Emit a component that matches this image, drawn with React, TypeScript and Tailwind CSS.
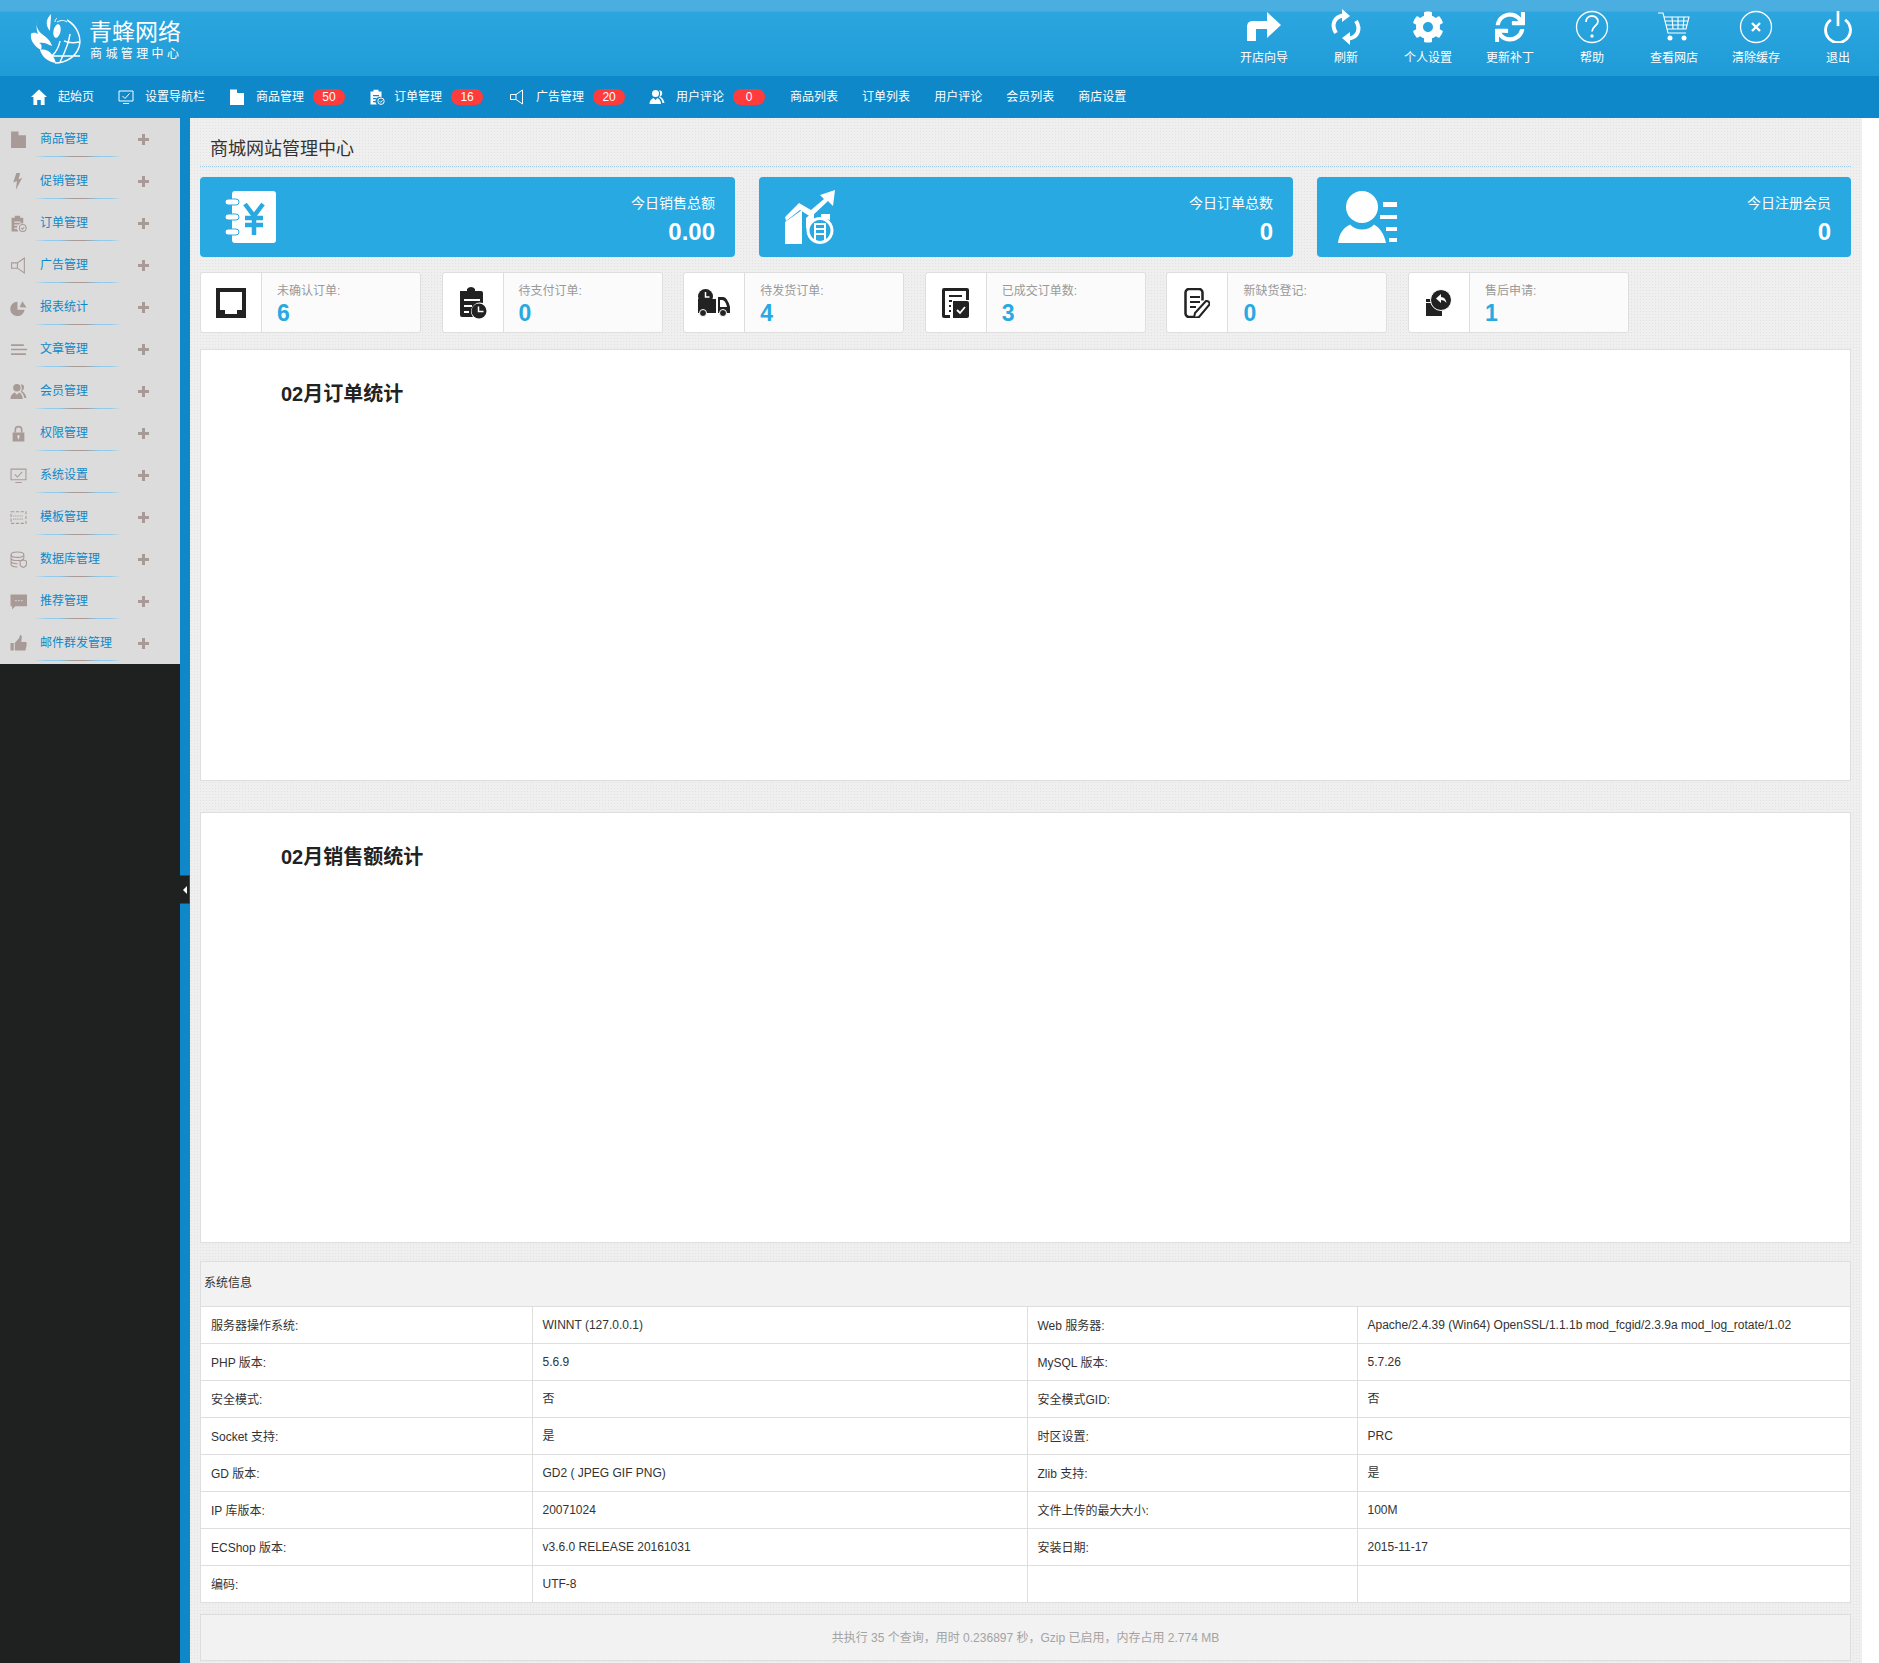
import type { ReactNode } from "react";
import { FaCog, FaSync } from "react-icons/fa";

function Svg({ size = 16, vb = "0 0 16 16", children }: { size?: number; vb?: string; children: ReactNode }) {
  return (
    <svg width={size} height={size} viewBox={vb} fill="currentColor" className="block shrink-0">
      {children}
    </svg>
  );
}

const IconHome = () => (
  <Svg>
    <path d="M8 0.5 16 8h-2.4v8H9.8v-5H6.2v5H2.4V8H0z" />
  </Svg>
);
const IconMonitor = () => (
  <Svg>
    <path d="M1 2h14v10H1z" fill="none" stroke="currentColor" />
    <path d="M4.500 7 7 9.500l4.500-5M5 14.500h6" fill="none" stroke="currentColor" />
  </Svg>
);
const IconFolder = () => (
  <Svg>
    <path d="M1 0.500h7v3.500h7v12H1z" />
  </Svg>
);
const IconClipboard = () => (
  <Svg>
    <path
      fillRule="evenodd"
      d="M1.500 2.500h3V0.800h5V2.500h3V8a4.500 4.500 0 0 0-4.600 7.500H1.500zM4 6v1.200h6V6zM4 9v1.200h3.500V9zM4 12v1.200h2.500V12z"
    />
    <circle cx="12" cy="12.200" r="3.200" fill="none" stroke="currentColor" />
    <path d="m10.600 12.200 1.100 1.100 1.800-2" fill="none" stroke="currentColor" />
  </Svg>
);
const IconBolt = () => (
  <Svg>
    <path d="M6 0 3 9l3.500-1.500L5.500 16l6-11.500-3.500 1.500L9.500 0z" />
  </Svg>
);
const IconSpeaker = () => (
  <Svg>
    <path d="M1.500 5.500H7L13.500 1v14L7 10.500H1.500zM7 5.500v5" fill="none" stroke="currentColor" />
  </Svg>
);
const IconPie = () => (
  <Svg>
    <path d="M7 2.500a6.800 6.800 0 1 0 6.800 7.600H7z" />
    <path d="M9 7.800 11.600 2 15.500 8z" />
  </Svg>
);
const IconLines = () => (
  <Svg>
    <path d="M1 3h12v1.600H1zM1 7.200h15v1.600H1zM1 11.500h14v1.600H1z" />
  </Svg>
);
const IconUsers = () => (
  <Svg>
    <circle cx="6.500" cy="4.500" r="3.500" />
    <path d="M0.500 15c0-3.500 2.500-5.500 4-6l2 2 2-2c1.500.5 3.500 2.500 3.500 6z" />
    <path d="M10 1.500c2.500-.5 3.500 1 3.200 3-.2 1.500-1 2.500-2.200 3 2 1 4 3 4.500 6.500h-2C13 11 11.500 9 10 8.500 11.500 6 11.500 3.500 10 1.500z" />
  </Svg>
);
const IconLock = () => (
  <Svg>
    <path d="M5 7V4.500a3 3 0 0 1 6 0V7" fill="none" stroke="currentColor" strokeWidth="1.500" />
    <path fillRule="evenodd" d="M2.500 7h11v8.500h-11zM8 9.500a1.300 1.300 0 0 0-.6 2.400V13.500h1.200v-1.600A1.300 1.300 0 0 0 8 9.500z" />
  </Svg>
);
const IconTemplate = () => (
  <Svg>
    <path d="M1 2.500h14v11H1z" fill="none" stroke="currentColor" strokeDasharray="3 1.500" />
    <path d="M3 6.500h10M3 9.500h10" fill="none" stroke="currentColor" strokeDasharray="1 1" />
  </Svg>
);
const IconDb = () => (
  <Svg>
    <ellipse cx="7" cy="3.500" rx="6" ry="2.500" fill="none" stroke="currentColor" />
    <path d="M1 3.500v9c0 1.400 2.700 2.500 6 2.500M1 6.500c0 1.400 2.700 2.500 6 2.500s6-1.100 6-2.500M1 9.500c0 1.400 2.700 2.500 6 2.500M13 3.500v3" fill="none" stroke="currentColor" />
    <path d="M9.500 9.500 12.500 8.500l3 1v3c0 1.500-1.500 2.500-3 3-1.500-.5-3-1.500-3-3z" fill="none" stroke="currentColor" />
  </Svg>
);
const IconChat = () => (
  <Svg>
    <path fillRule="evenodd" d="M0.500 1.500h15.500v11H5l-3 3v-3H0.500zM5 6.500h1.200v1.200H5zM7.800 6.500H9v1.200H7.800zM10.600 6.500h1.200v1.200h-1.200z" />
  </Svg>
);
const IconThumb = () => (
  <Svg>
    <path d="M0.500 7.500h3v7h-3zM4.500 14.500V7.500L8.500 3 9.500 0c1.500 0 2 1.500 1.500 3L10.500 6.500h4.500c1 0 1 3-.5 8z" />
  </Svg>
);

// top bar icons
const TopArrow = () => (
  <Svg size={36} vb="0 0 36 36">
    <path d="M1 32V18c0-4 2-6 6-6h14V3l14 13-14 13v-9H10v12z" />
  </Svg>
);
const TopRefresh = () => (
  <Svg size={36} vb="0 0 36 36">
    <path d="M8 24C3 16 6 8 15 6.500M28 12c5 8 2 16-7 17.500" fill="none" stroke="currentColor" strokeWidth="4" />
    <path d="M14 0l8 7-8 6zM22 36l-8-7 8-6z" />
  </Svg>
);
const TopHelp = () => (
  <Svg size={34} vb="0 0 34 34">
    <circle cx="17" cy="17" r="15.500" fill="none" stroke="currentColor" strokeWidth="1.300" />
    <path d="M11 12c0-4 3-6 6-6s6 2 6 5.500c0 4-6 5-6 10" fill="none" stroke="currentColor" strokeWidth="1.800" />
    <circle cx="17" cy="26" r="1.700" />
  </Svg>
);
const TopCart = () => (
  <Svg size={34} vb="0 0 34 34">
    <path d="M1 3h5l5 20h18M7 7h25l-3 12H10M15 7l1 12M21 7v12M27 7l-1 12M8 11h23M9 15h21" fill="none" stroke="currentColor" strokeWidth="1.100" />
    <circle cx="13" cy="28" r="2.500" />
    <circle cx="27" cy="28" r="2.500" />
  </Svg>
);
const TopClose = () => (
  <Svg size={34} vb="0 0 34 34">
    <circle cx="17" cy="17" r="15.500" fill="none" stroke="currentColor" strokeWidth="1.300" />
    <path d="m13 13 8 8M21 13l-8 8" fill="none" stroke="currentColor" strokeWidth="2.400" />
  </Svg>
);
const TopPower = () => (
  <Svg size={32} vb="0 0 36 36">
    <path d="M10 10a14 14 0 1 0 16 0" fill="none" stroke="currentColor" strokeWidth="3.200" />
    <path d="M16.500 0h3v17h-3z" />
  </Svg>
);

// stat card icons
const StatSales = () => (
  <svg width="52" height="52" viewBox="0 0 52 52" className="block">
    <rect x="7" y="0" width="44" height="52" rx="3" fill="#fff" />
    <rect x="0" y="8" width="14" height="6" rx="3" fill="#fff" stroke="#29a9e1" />
    <rect x="0" y="23" width="14" height="6" rx="3" fill="#fff" stroke="#29a9e1" />
    <rect x="0" y="38" width="14" height="6" rx="3" fill="#fff" stroke="#29a9e1" />
    <path d="m20 13 9 12 9-12M20 27h18M20 34h18M29 25v19" fill="none" stroke="#29a9e1" strokeWidth="4.500" />
  </svg>
);
const StatOrders = () => (
  <svg width="52" height="54" viewBox="0 0 52 54" className="block" fill="#fff">
    <path d="M0 27 14 13l12 7 13-11-4-4 15-5-2 16-5-5-17 16-11-7L1 31z" />
    <path d="M0 32 17 20v34H0z" />
    <path d="M21 28 29 21v10c-5 2-8 6-8 11z" />
    <path d="M36 24h9v6l-9-2z" />
    <path fillRule="evenodd" d="M35 27a13.500 13.500 0 1 0 .01 0zM35 30a10.500 10.500 0 1 1-.01 0z" />
    <path d="M29 33h12v17h-2V35h-8v15h-2zM31 38h8v2h-8zM31 43h8v2h-8z" />
  </svg>
);
const StatUsers = () => (
  <svg width="60" height="52" viewBox="0 0 60 52" className="block" fill="#fff">
    <ellipse cx="24" cy="16" rx="16" ry="16" />
    <path d="M0 52C1 43 5 37 12 33.500 16 37.500 20 38.500 24 38.500 29 38.500 33 37 36 33.500 42 37 46 43 48 52z" />
    <path d="M45 11h14v5H45zM42 24h17v4H42zM48 36h11v4H48zM51 47h8v4h-8z" />
  </svg>
);

// small card icons
const MiniInbox = () => (
  <svg width="30" height="30" viewBox="0 0 30 30" fill="#222" className="block">
    <path fillRule="evenodd" d="M0 0h30v30H0zM4 4v18h5v4h12v-4h5V4z" />
  </svg>
);
const MiniClipboard = () => (
  <svg width="28" height="32" viewBox="0 0 28 32" fill="#222" className="block">
    <path d="M1 4h7V2a5 5 0 0 1 8 0v2h6a2 2 0 0 1 2 2v10a9 9 0 0 0-10 14H3a2 2 0 0 1-2-2z" />
    <path d="M5 12h16v2H5zM5 18h8v2H5zM5 24h5v2H5z" fill="#fff" />
    <circle cx="20" cy="24" r="7.500" />
    <path d="M19.500 19.500v5h5" fill="none" stroke="#fff" strokeWidth="1.500" />
  </svg>
);
const MiniTruck = () => (
  <svg width="32" height="28" viewBox="0 0 32 28" fill="#222" className="block">
    <circle cx="7.500" cy="7.500" r="7.500" />
    <path d="M7.500 3v5h4" fill="none" stroke="#fff" strokeWidth="1.500" />
    <path d="M0 10h18V24H0z" />
    <path d="M20 8h5c3 0 6 5 7 10v6H20zM22 11v7h7c-.5-3-2-7-5-7z" fillRule="evenodd" />
    <circle cx="5" cy="24" r="3.500" stroke="#fff" />
    <circle cx="25" cy="24" r="3.500" stroke="#fff" />
  </svg>
);
const MiniDocCheck = () => (
  <svg width="27" height="30" viewBox="0 0 27 30" fill="#222" className="block">
    <path fillRule="evenodd" d="M2 0h23a2 2 0 0 1 2 2v10h-3V3H3v24h5v3H2a2 2 0 0 1-2-2V2a2 2 0 0 1 2-2z" />
    <path d="M7 7h13v2H7zM7 12h3v2H7zM7 17h2v2H7zM7 22h2v2H7z" />
    <path d="M11 13h14a2 2 0 0 1 2 2v13a2 2 0 0 1-2 2H11z" />
    <path d="m15 22 3 3 5-6" fill="none" stroke="#fff" strokeWidth="1.800" />
  </svg>
);
const MiniDocPen = () => (
  <svg width="26" height="30" viewBox="0 0 26 30" fill="#222" className="block">
    <path d="M14 29H5a3.500 3.500 0 0 1-3.500-3.500v-21A3.500 3.500 0 0 1 5 1h10a3.500 3.500 0 0 1 3.500 3.500v8" fill="none" stroke="#222" strokeWidth="2.500" />
    <path d="M6 8h10v2H6zM6 13h10v2H6zM6 18h6v2H6z" />
    <path d="M22 13a3 3 0 0 1 3.500 3.500L15 29l-5 1 1-5z" fill="#fff" stroke="#222" strokeWidth="2" />
  </svg>
);
const MiniReply = () => (
  <svg width="26" height="27" viewBox="0 0 26 27" fill="#222" className="block">
    <path d="M0 10h14v3H0zM0 14h16v13H0z" />
    <circle cx="15" cy="11" r="10.500" stroke="#fff" />
    <path d="M10 9.500 15 5v3c3 0 5 2 5.500 6-1.500-2-3-3-5.500-3v3z" fill="#fff" />
  </svg>
);

const Logo = () => (
  <svg width="52" height="50" viewBox="0 0 52 50" className="block" fill="#fff">
    <path d="M21 0c-5 5-6 11-1 17 0-5 1-10 1-17z" />
    <path d="M8 5C5 10 7 16 12 20c4 3 9 7 10 12-6-3-9-4-13-3 3 1 3 4 2 7C4 32 0 26 1 20c2-2 5-1 7 0C6 15 6 9 8 5z" />
    <ellipse cx="27" cy="17" rx="3.500" ry="7" transform="rotate(12 27 17)" />
    <path d="M10 36c7-2 13 3 16 13-8-1-14-6-16-13z" />
    <path d="M27 8c4-2 7-2 10 0M25 8c0-2 1-3 2-4" fill="none" stroke="#fff" strokeWidth="1" />
    <path d="M37 6c10 6 15 17 12 27-3 9-12 16-24 16M30 27c-1 6-4 11-8 15h28M40 20c-1 8-5 18-10 28M49 28c-4 1-10 1-15-1" fill="none" stroke="#fff" strokeWidth="1.500" />
  </svg>
);

const topActions = [
  { label: "开店向导", icon: <TopArrow /> },
  { label: "刷新", icon: <TopRefresh /> },
  { label: "个人设置", icon: <FaCog size={32} /> },
  { label: "更新补丁", icon: <FaSync size={30} /> },
  { label: "帮助", icon: <TopHelp /> },
  { label: "查看网店", icon: <TopCart /> },
  { label: "清除缓存", icon: <TopClose /> },
  { label: "退出", icon: <TopPower /> },
];

const navItems: { label: string; icon?: ReactNode; badge?: number; className?: string; iconClass?: string }[] = [
  { label: "起始页", icon: <IconHome /> },
  { label: "设置导航栏", icon: <IconMonitor /> },
  { label: "商品管理", icon: <IconFolder /> , badge: 50 },
  { label: "订单管理", icon: <IconClipboard />, badge: 16, iconClass: "mr-[9px]" },
  { label: "广告管理", icon: <IconSpeaker />, badge: 20, className: "ml-[2px]" },
  { label: "用户评论", icon: <IconUsers />, badge: 0 },
  { label: "商品列表", className: "ml-[1px]" },
  { label: "订单列表" },
  { label: "用户评论" },
  { label: "会员列表" },
  { label: "商店设置" },
];

const sideItems = [
  { label: "商品管理", icon: <IconFolder /> },
  { label: "促销管理", icon: <IconBolt /> },
  { label: "订单管理", icon: <IconClipboard /> },
  { label: "广告管理", icon: <IconSpeaker /> },
  { label: "报表统计", icon: <IconPie /> },
  { label: "文章管理", icon: <IconLines /> },
  { label: "会员管理", icon: <IconUsers /> },
  { label: "权限管理", icon: <IconLock /> },
  { label: "系统设置", icon: <IconMonitor /> },
  { label: "模板管理", icon: <IconTemplate /> },
  { label: "数据库管理", icon: <IconDb /> },
  { label: "推荐管理", icon: <IconChat /> },
  { label: "邮件群发管理", icon: <IconThumb /> },
];

const miniCards = [
  { label: "未确认订单:", value: 6, icon: <MiniInbox /> },
  { label: "待支付订单:", value: 0, icon: <MiniClipboard /> },
  { label: "待发货订单:", value: 4, icon: <MiniTruck /> },
  { label: "已成交订单数:", value: 3, icon: <MiniDocCheck /> },
  { label: "新缺货登记:", value: 0, icon: <MiniDocPen /> },
  { label: "售后申请:", value: 1, icon: <MiniReply /> },
];

const sysRows = [
  ["服务器操作系统:", "WINNT (127.0.0.1)", "Web 服务器:", "Apache/2.4.39 (Win64) OpenSSL/1.1.1b mod_fcgid/2.3.9a mod_log_rotate/1.02"],
  ["PHP 版本:", "5.6.9", "MySQL 版本:", "5.7.26"],
  ["安全模式:", "否", "安全模式GID:", "否"],
  ["Socket 支持:", "是", "时区设置:", "PRC"],
  ["GD 版本:", "GD2 ( JPEG GIF PNG)", "Zlib 支持:", "是"],
  ["IP 库版本:", "20071024", "文件上传的最大大小:", "100M"],
  ["ECShop 版本:", "v3.6.0 RELEASE 20161031", "安装日期:", "2015-11-17"],
  ["编码:", "UTF-8", "", ""],
];

function StatCard({ icon, label, value, w, iconLeft }: { icon: ReactNode; label: string; value: string; w: string; iconLeft: string }) {
  return (
    <div className={`${w} h-20 rounded bg-[#29a9e1] flex items-center justify-between pr-[20px] text-white`}>
      <div className={iconLeft}>{icon}</div>
      <div className="text-right pt-[4px]">
        <div className="text-sm leading-5">{label}</div>
        <div className="mt-[5px] text-2xl leading-7 font-bold">{value}</div>
      </div>
    </div>
  );
}

function ChartPanel({ title, height, className }: { title: string; height: string; className: string }) {
  return (
    <div className={`${height} ${className} bg-white border border-[#dedede] pl-[80px] pt-[30px]`}>
      <h2 className="text-xl leading-7 font-bold text-[#222]">{title}</h2>
    </div>
  );
}

export default function App() {
  return (
    <div className="w-full h-[1663px] flex flex-col bg-white text-xs text-[#333] font-['Liberation_Sans','Noto_Sans_CJK_SC',sans-serif]">
      <header className="h-[76px] shrink-0 flex items-start justify-between text-white bg-[linear-gradient(#4aaee0_0,#4aaee0_11px,#2ba6df_12px,#1f9bd7_76px)]">
        <div className="flex items-start pl-[30px] pt-[14px]">
          <Logo />
          <div className="ml-[7px] pt-[4px]">
            <div className="text-[23px] leading-[28px] font-normal">青蜂网络</div>
            <div className="text-xs leading-4 tracking-[3.4px] pl-[1px]">商城管理中心</div>
          </div>
        </div>
        <div className="flex">
          {topActions.map((a) => (
            <div key={a.label} className="w-[82px] flex flex-col items-center pt-[9px]">
              <div className="h-[36px] flex items-center justify-center">{a.icon}</div>
              <div className="mt-[5px] leading-4">{a.label}</div>
            </div>
          ))}
        </div>
      </header>

      <nav className="h-[42px] shrink-0 flex items-center gap-6 pl-[31px] text-white bg-[#0e88c8]">
        {navItems.map((n, i) => (
          <div key={i} className={`flex items-center ${n.className ?? ""}`}>
            {n.icon && <span className={n.iconClass ?? "mr-[11px]"}>{n.icon}</span>}
            <span>{n.label}</span>
            {n.badge !== undefined && (
              <span className="ml-[9px] w-[32px] h-4 rounded-full bg-[#ff3b3b] text-center leading-4">{n.badge}</span>
            )}
          </div>
        ))}
      </nav>

      <div className="flex flex-1 min-h-0">
        <aside className="w-[180px] shrink-0 flex flex-col bg-[#1f2120]">
          <div className="bg-[#dcdcdc] h-[546px]">
            {sideItems.map((s) => (
              <div key={s.label} className="h-[42px]">
                <div className="h-[38px] pt-[4px] flex items-center pl-[10px] text-[#a89a96]">
                  <span className="w-[30px] [&_svg]:w-[17px] [&_svg]:h-[17px]">{s.icon}</span>
                  <span className="text-[#0e88c8]">{s.label}</span>
                  <svg width="11" height="11" viewBox="0 0 11 11" fill="currentColor" className="ml-auto mr-[31px]">
                    <path d="M4 0h3v4h4v3H7v4H4V7H0V4h4z" />
                  </svg>
                </div>
                <div className="ml-[34px] w-[87px] h-px bg-[linear-gradient(90deg,#dcdcdc,#8ecbee_15%,#8ecbee_28%,#a89a96_45%,#a89a96_58%,#8ecbee_75%,#8ecbee_88%,#dcdcdc)]" />
              </div>
            ))}
          </div>
        </aside>

        <div className="relative w-[10px] shrink-0 bg-[#0e88c8]">
          <div className="absolute left-0 top-[757px] w-[10px] h-[29px] bg-[#1f2120] border-y border-r border-[#3a3f7a] flex items-center justify-center">
            <span className="w-0 h-0 border-y-[4px] border-y-transparent border-r-[4px] border-r-white" />
          </div>
        </div>

        <main className="w-[1672px] shrink-0 pl-[10px] pr-[11px] bg-[#efefef] bg-[radial-gradient(#e2e2e2_1px,transparent_1px)] bg-[length:3px_3px]">
          <div className="h-[49px] pl-[10px] pt-[18px] border-b border-dotted border-[#9ccbe6]">
            <h1 className="text-lg leading-[26px] font-normal">商城网站管理中心</h1>
          </div>

          <div className="mt-[10px] flex gap-[24px]">
            <StatCard w="w-[535px]" iconLeft="pl-[25px]" icon={<StatSales />} label="今日销售总额" value="0.00" />
            <StatCard w="w-[534px]" iconLeft="pl-[26px]" icon={<StatOrders />} label="今日订单总数" value="0" />
            <StatCard w="w-[534px]" iconLeft="pl-[21px]" icon={<StatUsers />} label="今日注册会员" value="0" />
          </div>

          <div className="mt-[15px] flex gap-[20.6px]">
            {miniCards.map((c) => (
              <div key={c.label} className="w-[221px] h-[61px] flex rounded-[3px] border border-[#dedede] bg-white">
                <div className="w-[61px] flex items-center justify-center border-r border-[#dedede]">{c.icon}</div>
                <div className="pl-[15px] pt-[10px] bg-[#fbfbfb] flex-1 rounded-r-[3px]">
                  <div className="leading-4 text-[#999]">{c.label}</div>
                  <div className="text-[23px] leading-7 font-bold text-[#29a9e1]">{c.value}</div>
                </div>
              </div>
            ))}
          </div>

          <ChartPanel title="02月订单统计" height="h-[432px]" className="mt-[16px]" />
          <ChartPanel title="02月销售额统计" height="h-[431px]" className="mt-[31px]" />

          <section className="mt-[18px] border border-[#dedede] border-b-0">
            <div className="h-[44px] flex items-center pl-[3px] pb-[2px] bg-[#f2f2f2]">系统信息</div>
            <table className="w-full table-fixed border-collapse bg-white">
              <colgroup>
                <col className="w-[331px]" />
                <col className="w-[495px]" />
                <col className="w-[330px]" />
                <col />
              </colgroup>
              <tbody>
                {sysRows.map((r, i) => (
                  <tr key={i} className="h-[37px]">
                    {r.map((cell, j) => (
                      <td
                        key={j}
                        className={`border border-[#dedede] pl-[10px] first:border-l-0 last:border-r-0 ${j % 2 === 0 ? "pt-[2px]" : ""}`}
                      >
                        {cell}
                      </td>
                    ))}
                  </tr>
                ))}
              </tbody>
            </table>
          </section>

          <div className="mt-[11px] h-[47px] flex items-center justify-center bg-[#f2f2f2] border border-[#dedede] text-[#a3a3a3]">
            共执行 35 个查询，用时 0.236897 秒，Gzip 已启用，内存占用 2.774 MB
          </div>
        </main>
      </div>
    </div>
  );
}
